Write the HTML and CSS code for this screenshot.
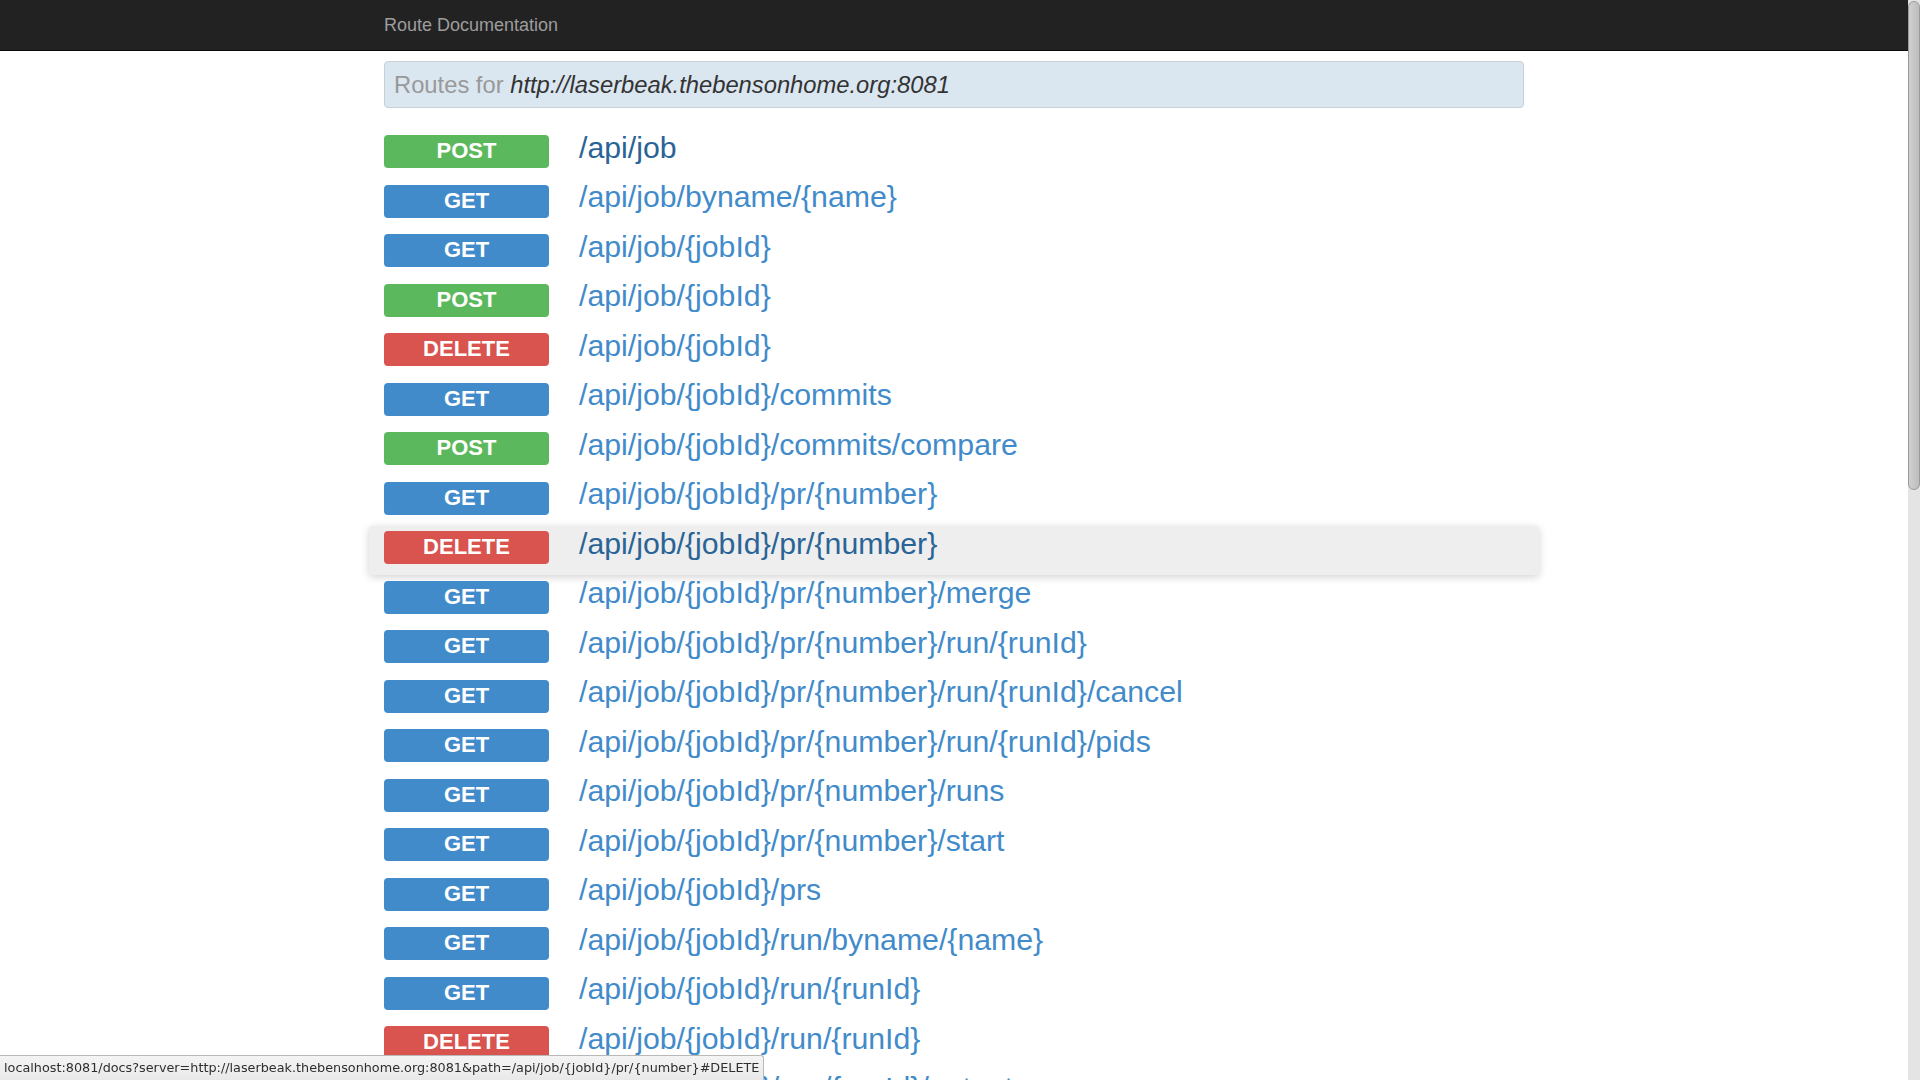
FILE: index.html
```html
<!DOCTYPE html>
<html lang="en">
<head>
<meta charset="utf-8">
<title>Route Documentation</title>
<link rel="stylesheet" href="styles.css">
</head>
<body>
<div class="viewport">
  <div class="page">
    <nav class="navbar">
      <div class="container">
        <span class="brand">Route Documentation</span>
      </div>
    </nav>
    <div class="container main">
      <div class="well">Routes for <em>http://laserbeak.thebensonhome.org:8081</em></div>
      <ul class="routes">
        <li class="route"><span class="badge post">POST</span><a class="path focus">/api/job</a></li>
        <li class="route"><span class="badge get">GET</span><a class="path">/api/job/byname/{name}</a></li>
        <li class="route"><span class="badge get">GET</span><a class="path">/api/job/{jobId}</a></li>
        <li class="route"><span class="badge post">POST</span><a class="path">/api/job/{jobId}</a></li>
        <li class="route"><span class="badge delete">DELETE</span><a class="path">/api/job/{jobId}</a></li>
        <li class="route"><span class="badge get">GET</span><a class="path">/api/job/{jobId}/commits</a></li>
        <li class="route"><span class="badge post">POST</span><a class="path">/api/job/{jobId}/commits/compare</a></li>
        <li class="route"><span class="badge get">GET</span><a class="path">/api/job/{jobId}/pr/{number}</a></li>
        <li class="route hover"><span class="badge delete">DELETE</span><a class="path">/api/job/{jobId}/pr/{number}</a></li>
        <li class="route"><span class="badge get">GET</span><a class="path">/api/job/{jobId}/pr/{number}/merge</a></li>
        <li class="route"><span class="badge get">GET</span><a class="path">/api/job/{jobId}/pr/{number}/run/{runId}</a></li>
        <li class="route"><span class="badge get">GET</span><a class="path">/api/job/{jobId}/pr/{number}/run/{runId}/cancel</a></li>
        <li class="route"><span class="badge get">GET</span><a class="path">/api/job/{jobId}/pr/{number}/run/{runId}/pids</a></li>
        <li class="route"><span class="badge get">GET</span><a class="path">/api/job/{jobId}/pr/{number}/runs</a></li>
        <li class="route"><span class="badge get">GET</span><a class="path">/api/job/{jobId}/pr/{number}/start</a></li>
        <li class="route"><span class="badge get">GET</span><a class="path">/api/job/{jobId}/prs</a></li>
        <li class="route"><span class="badge get">GET</span><a class="path">/api/job/{jobId}/run/byname/{name}</a></li>
        <li class="route"><span class="badge get">GET</span><a class="path">/api/job/{jobId}/run/{runId}</a></li>
        <li class="route"><span class="badge delete">DELETE</span><a class="path">/api/job/{jobId}/run/{runId}</a></li>
        <li class="route"><span class="badge get">GET</span><a class="path">/api/job/{jobId}/run/{runId}/output</a></li>
        <li class="route"><span class="badge get">GET</span><a class="path">/api/job/{jobId}/run/{runId}/pids</a></li>
      </ul>
    </div>
  </div>
  <div class="scrollbar"><div class="thumb"></div></div>
</div>
<div class="statusbar">localhost:8081/docs?server=http://laserbeak.thebensonhome.org:8081&amp;path=/api/job/{jobId}/pr/{number}#DELETE</div>
</body>
</html>
```
FILE: styles.css
```css
html, body {
  margin: 0;
  padding: 0;
  height: 100%;
  overflow: hidden;
  background: #fff;
  font-family: "Liberation Sans", Arial, sans-serif;
  color: #333;
}

.viewport {
  display: flex;
  height: 100vh;
}

.page {
  flex: 1;
  min-width: 0;
  overflow: hidden;
}

.container {
  box-sizing: border-box;
  width: 1170px;
  margin: 0 auto;
  padding: 0 15px;
}

.navbar {
  height: 50px;
  background: #222;
  border-bottom: 1px solid #080808;
}

.brand {
  display: inline-block;
  margin-left: -15px;
  padding: 15px;
  font-size: 18px;
  line-height: 21px;
  color: #9d9d9d;
}

.main {
  padding-top: 10px;
}

.well {
  box-sizing: border-box;
  height: 47px;
  padding: 6px 9px 0;
  border: 1px solid #c9d0d6;
  border-radius: 4px;
  background: #dae6f0;
  font-size: 23.75px;
  line-height: 34px;
  color: #999;
  margin-bottom: 21.5px;
  white-space: nowrap;
}

.well em {
  color: #333;
}

.routes {
  list-style: none;
  margin: 0 -15px;
  padding: 0;
}

.route {
  display: flex;
  align-items: flex-start;
  gap: 30px;
  height: 49.5px;
  padding: 0 15px;
  border-radius: 4px;
}

.route.hover {
  background: #eee;
  box-shadow: 0 2px 9px rgba(0, 0, 0, 0.18);
}

.badge {
  flex: none;
  width: 165px;
  height: 33px;
  margin-top: 5.5px;
  border-radius: 4px;
  color: #fff;
  font-weight: bold;
  font-size: 22px;
  line-height: 31px;
  text-align: center;
}

.badge.post { background: #5cb85c; }
.badge.get { background: #428bca; }
.badge.delete { background: #d9534f; }

.path {
  font-size: 30.25px;
  line-height: 36px;
  color: #428bca;
  white-space: nowrap;
  cursor: pointer;
}

.path.focus,
.route.hover .path {
  color: #2a6496;
}

.scrollbar {
  flex: none;
  width: 12px;
  box-sizing: border-box;
  padding: 1px 0 0 0;
  background: #e4e4e4;
}

.thumb {
  box-sizing: border-box;
  height: 489px;
  border: 1px solid #9a9a9a;
  border-radius: 6px;
  background: linear-gradient(to right, #d0d0d0, #bdbdbd);
}

.statusbar {
  position: fixed;
  left: 0;
  bottom: 0;
  box-sizing: border-box;
  height: 25px;
  padding: 0 4px;
  border-top: 1px solid #b9b9b9;
  border-right: 1px solid #b9b9b9;
  border-top-right-radius: 3px;
  background: linear-gradient(#f4f4f4, #e9e9e9);
  font-family: "DejaVu Sans", sans-serif;
  font-size: 12.8px;
  line-height: 24px;
  color: #2e2e2e;
  white-space: nowrap;
}
```
